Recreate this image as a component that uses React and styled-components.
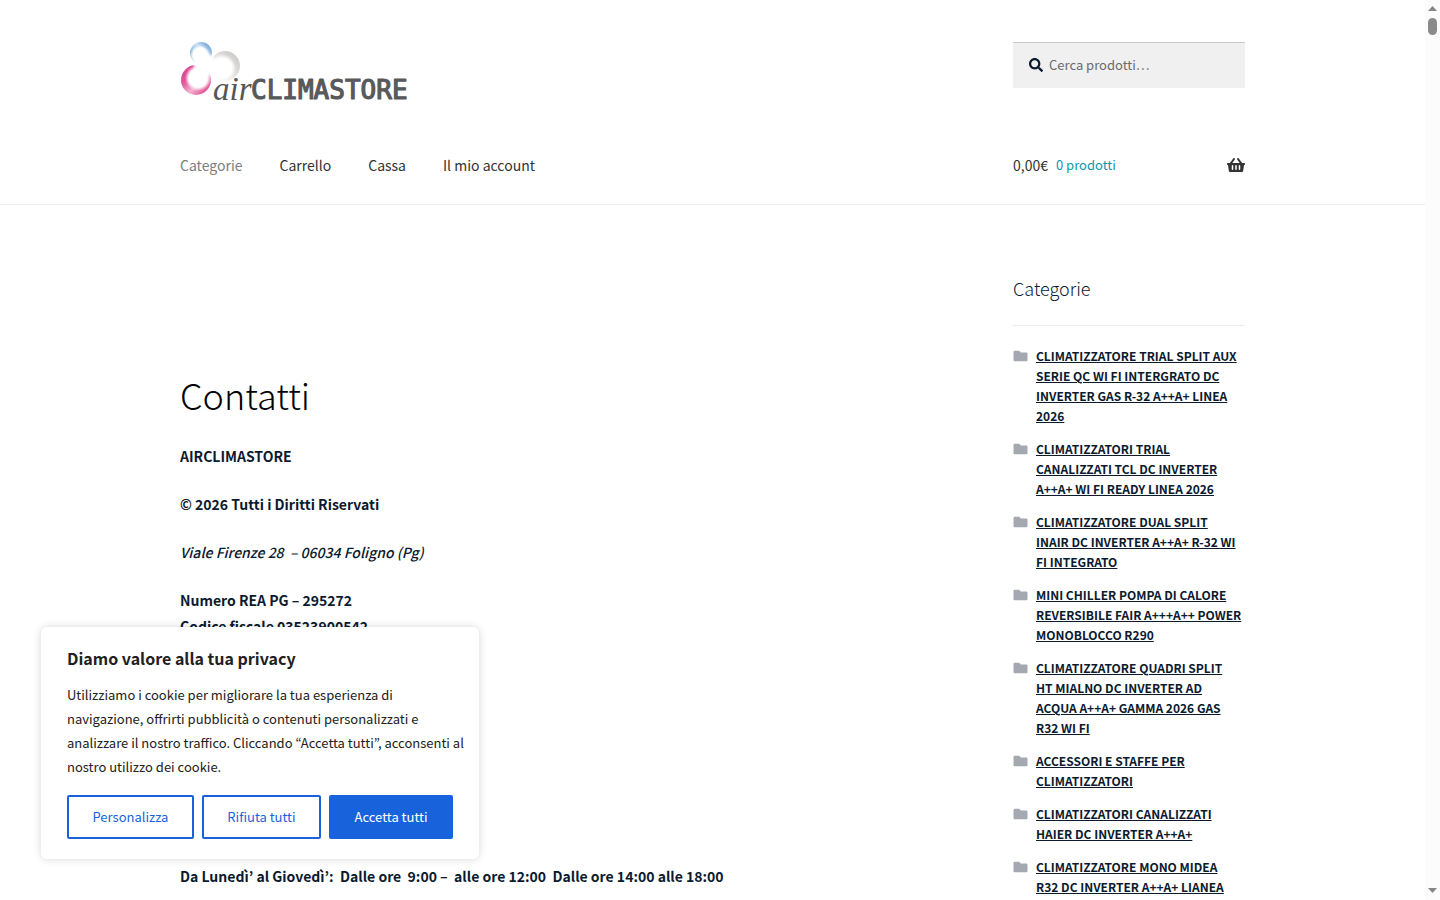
import React from "react";
import styled, { createGlobalStyle, css } from "styled-components";

const GlobalStyle = createGlobalStyle`
  *, *::before, *::after { box-sizing: border-box; }
  html, body { margin: 0; padding: 0; background: #fff; }
  body, button, input {
    font-family: "Noto Sans CJK JP", "Noto Sans CJK SC", "Noto Sans", sans-serif;
  }
`;

const Shell = styled.div`
  display: flex;
  height: 100vh;
  overflow: hidden;
  color: #0b1a2e;
  font-size: 14px;
  line-height: 26px;
`;

const Page = styled.div`
  flex: 1;
  min-width: 0;
  overflow: hidden;
`;

const Container = styled.div`
  max-width: 1065px;
  margin: 0 auto;
`;

const Header = styled.header`
  border-bottom: 1px solid #ececec;
  padding: 42px 0 12px;
`;

const Bar = styled.div`
  display: flex;
  justify-content: space-between;
  align-items: flex-start;
`;

const BrandLink = styled.a`
  display: block;
  height: 96px;
`;

const Search = styled.label`
  display: flex;
  align-items: center;
  gap: 6px;
  width: 232px;
  height: 46px;
  padding: 0 16px 2px;
  background: #f0f0f1;
  border-top: 1px solid #c9c9c9;
`;

const SearchInput = styled.input`
  flex: 1;
  min-width: 0;
  border: 0;
  padding: 0;
  outline: 0;
  background: transparent;
  font-size: 13px;
  color: #43454b;
  &::placeholder { color: #6a6a6e; opacity: 1; }
`;

const Nav = styled.nav`
  display: flex;
  gap: 37px;
  padding: 14px 0;
`;

const NavLink = styled.a`
  font-size: 14px;
  line-height: 26px;
  text-decoration: none;
  color: ${(p) => (p.$current ? "#7d7d7d" : "#333")};
`;

const Cart = styled.a`
  display: flex;
  align-items: center;
  gap: 8px;
  width: 232px;
  padding: 14px 0;
  color: #333;
  text-decoration: none;
  svg { margin-left: auto; }
`;

const CartCount = styled.span`
  font-size: 13px;
  color: #1296ac;
`;

const Columns = styled.div`
  display: flex;
  justify-content: space-between;
`;

const Main = styled.main`
  padding-top: 159px;
`;

const Title = styled.h1`
  margin: 0 0 19px;
  font-size: 36px;
  line-height: 60px;
  font-weight: 300;
  color: #000;
`;

const Paragraph = styled.p`
  margin: 0 0 22px;
  font-weight: ${(p) => (p.$italic ? 500 : 700)};
  white-space: pre-wrap;
  font-style: ${(p) => (p.$italic ? "italic" : "normal")};
`;

const Hours = styled(Paragraph)`
  margin-top: 224px;
`;

const Sidebar = styled.aside`
  width: 232px;
  padding-top: 67px;
`;

const WidgetTitle = styled.h2`
  margin: 0 0 20px;
  padding-bottom: 21px;
  border-bottom: 1px solid #ececec;
  font-size: 18px;
  line-height: 32px;
  font-weight: 300;
`;

const CategoryList = styled.ul`
  margin: 0;
  padding: 0;
  list-style: none;
`;

const CategoryItem = styled.li`
  display: flex;
  gap: 8px;
  margin-bottom: 13px;
  line-height: 20px;
  svg { flex: none; margin-top: 3px; }
`;

const CategoryLink = styled.a`
  font-size: 12px;
  font-weight: 700;
  white-space: pre;
  color: #0b1a2e;
  text-decoration: underline;
`;

const Banner = styled.section`
  position: absolute;
  left: 41px;
  bottom: 41px;
  width: 438px;
  padding: 18px 26px 20px;
  border-radius: 6px;
  background: #fff;
  box-shadow: 0 0 8px rgba(0, 0, 0, 0.16);
  color: #212121;
`;

const BannerTitle = styled.h2`
  margin: 0 0 12px;
  font-size: 16px;
  line-height: 26px;
  font-weight: 700;
`;

const BannerText = styled.p`
  margin: 0 0 16px;
  font-size: 13px;
  line-height: 24px;
  white-space: pre;
`;

const BannerActions = styled.div`
  display: flex;
  gap: 8px;
`;

const BannerButton = styled.button`
  flex: 1 1 auto;
  height: 44px;
  padding: 0 0 2px;
  border: 2px solid #1863dc;
  border-radius: 2px;
  background: transparent;
  color: #1863dc;
  font-size: 13px;
  ${(p) => p.$primary && css`
    background: #1863dc;
    color: #fff;
  `}
`;

const Scrollbar = styled.div`
  display: flex;
  flex-direction: column;
  align-items: center;
  justify-content: space-between;
  width: 15px;
  padding: 6px 0 7px;
  background: #fcfcfc;
`;

const ScrollTop = styled.div`
  display: grid;
  gap: 7px;
  justify-items: center;
`;

const ScrollThumb = styled.div`
  width: 9px;
  height: 17px;
  border-radius: 5px;
  background: #8b8b8b;
`;

const categories = [
  "CLIMATIZZATORE TRIAL SPLIT AUX\nSERIE QC WI FI INTERGRATO DC\nINVERTER GAS R-32 A++A+ LINEA\n2026",
  "CLIMATIZZATORI TRIAL\nCANALIZZATI TCL DC INVERTER\nA++A+ WI FI READY LINEA 2026",
  "CLIMATIZZATORE DUAL SPLIT\nINAIR DC INVERTER A++A+ R-32 WI\nFI INTEGRATO",
  "MINI CHILLER POMPA DI CALORE\nREVERSIBILE FAIR A+++A++ POWER\nMONOBLOCCO R290",
  "CLIMATIZZATORE QUADRI SPLIT\nHT MIALNO DC INVERTER AD\nACQUA A++A+ GAMMA 2026 GAS\nR32 WI FI",
  "ACCESSORI E STAFFE PER\nCLIMATIZZATORI",
  "CLIMATIZZATORI CANALIZZATI\nHAIER DC INVERTER A++A+",
  "CLIMATIZZATORE MONO MIDEA\nR32 DC INVERTER A++A+ LIANEA",
];

function Logo() {
  return (
    <svg width="231" height="66" viewBox="0 0 231 66" role="img" aria-label="airCLIMASTORE">
      <defs>
        <linearGradient id="blue" x1="0" y1="1" x2="1" y2="0">
          <stop offset="0" stopColor="#cfe4f5" />
          <stop offset=".3" stopColor="#86b8e4" />
          <stop offset=".6" stopColor="#cfe2f3" />
          <stop offset="1" stopColor="#3f87c9" />
        </linearGradient>
        <linearGradient id="grey" x1="0" y1="1" x2="1" y2="0">
          <stop offset="0" stopColor="#fff" />
          <stop offset=".4" stopColor="#ecebea" />
          <stop offset="1" stopColor="#c5c2c1" />
        </linearGradient>
        <linearGradient id="pink" x1="0" y1="0" x2="1" y2="1">
          <stop offset="0" stopColor="#d93c8e" />
          <stop offset=".35" stopColor="#e25a9d" />
          <stop offset=".6" stopColor="#f3b3d0" />
          <stop offset="1" stopColor="#d61f72" />
        </linearGradient>
        <radialGradient id="glow">
          <stop offset="0" stopColor="#fff" />
          <stop offset=".7" stopColor="#fff" />
          <stop offset="1" stopColor="#fff" stopOpacity="0" />
        </radialGradient>
      </defs>
      <circle cx="21" cy="11" r="11" fill="url(#blue)" />
      <circle cx="20" cy="13" r="10" fill="url(#glow)" />
      <circle cx="45" cy="24" r="15" fill="url(#grey)" />
      <circle cx="42" cy="26" r="14" fill="url(#glow)" />
      <circle cx="16" cy="38" r="15" fill="url(#pink)" />
      <circle cx="18" cy="36" r="13" fill="url(#glow)" />
      <circle cx="25" cy="23" r="13" fill="url(#glow)" />
      <text x="33" y="58" fontFamily="Liberation Serif, serif" fontStyle="italic" fontSize="33" fill="#555">air</text>
      <text x="71" y="57" fontFamily="DejaVu Sans Mono, monospace" fontSize="26" fill="#58595b" stroke="#58595b" strokeWidth="1.2" strokeLinejoin="round">CLIMASTORE</text>
    </svg>
  );
}

const SearchIcon = () => (
  <svg width="14" height="14" viewBox="0 0 512 512" fill="#0b1a2e" aria-hidden="true">
    <path d="M505 442.700L405.300 343c-4.500-4.500-10.600-7-17-7H372c27.600-35.300 44-79.700 44-128C416 93.100 322.900 0 208 0S0 93.100 0 208s93.100 208 208 208c48.300 0 92.700-16.400 128-44v16.300c0 6.400 2.500 12.500 7 17l99.700 99.700c9.400 9.400 24.600 9.400 33.900 0l28.300-28.300c9.400-9.400 9.400-24.600.1-34zM208 336c-70.700 0-128-57.200-128-128 0-70.700 57.200-128 128-128 70.700 0 128 57.200 128 128 0 70.700-57.200 128-128 128z" />
  </svg>
);

const BasketIcon = () => (
  <svg width="18" height="16" viewBox="0 0 576 512" fill="#333" aria-hidden="true">
    <path d="M576 216v16c0 13.255-10.745 24-24 24h-8l-26.113 182.788C514.509 462.435 494.257 480 470.370 480H105.630c-23.887 0-44.139-17.565-47.518-41.212L32 256h-8c-13.255 0-24-10.745-24-24v-16c0-13.255 10.745-24 24-24h67.341l106.780-146.821c10.395-14.292 30.407-17.453 44.701-7.058 14.293 10.395 17.453 30.408 7.058 44.701L170.477 192h235.046L326.120 82.821c-10.395-14.292-7.234-34.306 7.059-44.701 14.291-10.395 34.306-7.235 44.701 7.058L484.659 192H552c13.255 0 24 10.745 24 24zM312 392V280c0-13.255-10.745-24-24-24s-24 10.745-24 24v112c0 13.255 10.745 24 24 24s24-10.745 24-24zm112 0V280c0-13.255-10.745-24-24-24s-24 10.745-24 24v112c0 13.255 10.745 24 24 24s24-10.745 24-24zm-224 0V280c0-13.255-10.745-24-24-24s-24 10.745-24 24v112c0 13.255 10.745 24 24 24s24-10.745 24-24z" />
  </svg>
);

const FolderIcon = () => (
  <svg width="15" height="14" viewBox="0 0 512 512" fill="#a4a9b1" aria-hidden="true">
    <path d="M464 128H272l-64-64H48C21.490 64 0 85.490 0 112v288c0 26.510 21.490 48 48 48h416c26.510 0 48-21.490 48-48V176c0-26.510-21.490-48-48-48z" />
  </svg>
);

const Arrow = ({ down }) => (
  <svg width="9" height="5" viewBox="0 0 9 5" fill="#858585" aria-hidden="true">
    <path d={down ? "M0 0h9L4.500 5z" : "M0 5h9L4.500 0z"} />
  </svg>
);

export default function App() {
  return (
    <>
      <GlobalStyle />
      <Shell>
        <Page>
          <Header>
            <Container>
              <Bar>
                <BrandLink href="#home"><Logo /></BrandLink>
                <Search>
                  <SearchIcon />
                  <SearchInput type="search" placeholder="Cerca prodotti…" aria-label="Cerca prodotti" />
                </Search>
              </Bar>
              <Bar>
                <Nav>
                  <NavLink href="#categorie" $current>Categorie</NavLink>
                  <NavLink href="#carrello">Carrello</NavLink>
                  <NavLink href="#cassa">Cassa</NavLink>
                  <NavLink href="#account">Il mio account</NavLink>
                </Nav>
                <Cart href="#carrello">
                  <span>0,00€</span>
                  <CartCount>0 prodotti</CartCount>
                  <BasketIcon />
                </Cart>
              </Bar>
            </Container>
          </Header>
          <Container>
            <Columns>
              <Main>
                <Title>Contatti</Title>
                <Paragraph>AIRCLIMASTORE</Paragraph>
                <Paragraph>© 2026 Tutti i Diritti Riservati</Paragraph>
                <Paragraph $italic>{"Viale Firenze 28  – 06034 Foligno (Pg)"}</Paragraph>
                <Paragraph>{"Numero REA PG – 295272\nCodice fiscale 03523900542"}</Paragraph>
                <Hours>{"Da Lunedì’ al Giovedì’:  Dalle ore  9:00 –  alle ore 12:00  Dalle ore 14:00 alle 18:00"}</Hours>
              </Main>
              <Sidebar>
                <WidgetTitle>Categorie</WidgetTitle>
                <CategoryList>
                  {categories.map((name) => (
                    <CategoryItem key={name}>
                      <FolderIcon />
                      <CategoryLink href="#categoria">{name}</CategoryLink>
                    </CategoryItem>
                  ))}
                </CategoryList>
              </Sidebar>
            </Columns>
          </Container>
        </Page>
        <Scrollbar aria-hidden="true">
          <ScrollTop>
            <Arrow />
            <ScrollThumb />
          </ScrollTop>
          <Arrow down />
        </Scrollbar>
      </Shell>
      <Banner aria-label="Privacy">
        <BannerTitle>Diamo valore alla tua privacy</BannerTitle>
        <BannerText>
          {"Utilizziamo i cookie per migliorare la tua esperienza di\nnavigazione, offrirti pubblicità o contenuti personalizzati e\nanalizzare il nostro traffico. Cliccando “Accetta tutti”, acconsenti al\nnostro utilizzo dei cookie."}
        </BannerText>
        <BannerActions>
          <BannerButton type="button">Personalizza</BannerButton>
          <BannerButton type="button">Rifiuta tutti</BannerButton>
          <BannerButton type="button" $primary>Accetta tutti</BannerButton>
        </BannerActions>
      </Banner>
    </>
  );
}
